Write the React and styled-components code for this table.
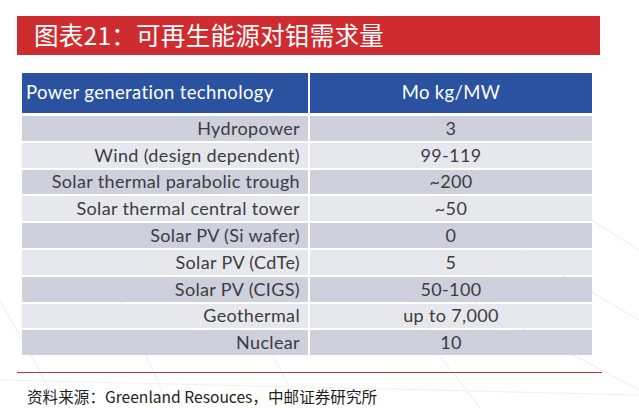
import React from "react";
import styled, { createGlobalStyle } from "styled-components";

const Global = createGlobalStyle`
  html, body { margin: 0; padding: 0; background: #ffffff; }
  body { width: 639px; height: 408px; overflow: hidden; }
`;

const Page = styled.div`
  position: relative;
  width: 639px;
  height: 408px;
  display: flex;
  flex-direction: column;
  padding-top: 16px;
  box-sizing: border-box;
  font-family: Lato, "Noto Sans", sans-serif;
`;

const Watermark = styled.svg`
  position: absolute;
  inset: 0;
  z-index: 0;
  pointer-events: none;
`;

const Content = styled.div`
  position: relative;
  z-index: 1;
  display: flex;
  flex-direction: column;
`;

const TitleBar = styled.div`
  margin-left: 17px;
  width: 583px;
  height: 39px;
  background: #cf2c2f;
  display: flex;
  align-items: center;
  padding-left: 17px;
  padding-bottom: 3px;
  box-sizing: border-box;
  color: #ffffff;
  font-family: "Noto Sans CJK SC", "Noto Sans", sans-serif;
  font-size: 24.6px;
  letter-spacing: 0.2px;
`;

const Table = styled.div`
  margin-top: 18px;
  margin-left: 22px;
  width: 570px;
  display: grid;
  grid-template-columns: 286px 282px;
  column-gap: 2px;
  row-gap: 2px;
  grid-template-rows: 41px repeat(9, 24.8px);
`;

const HeadCell = styled.div`
  background: #2a52a0;
  color: #ffffff;
  font-size: 18.5px;
  letter-spacing: 0.35px;
  display: flex;
  align-items: center;
  justify-content: ${(p) => (p.$center ? "center" : "flex-start")};
  padding-left: ${(p) => (p.$center ? "0" : "4px")};
  padding-bottom: 2px;
  margin-bottom: 1px;
`;

const Cell = styled.div`
  background: ${(p) => (p.$dark ? "#ced0dc" : "#e7e8ee")};
  color: #3c3c40;
  font-size: 18px;
  letter-spacing: 0.35px;
  display: flex;
  align-items: center;
  justify-content: ${(p) => (p.$center ? "center" : "flex-end")};
  padding-right: ${(p) => (p.$center ? "0" : "8px")};
  padding-bottom: 1px;
  box-sizing: border-box;
`;

const Rule = styled.div`
  margin-top: 17px;
  margin-left: 17px;
  width: 585px;
  height: 1px;
  background: #c8323b;
`;

const Source = styled.div`
  margin-top: 14px;
  margin-left: 27px;
  font-family: "Noto Sans CJK SC", "Noto Sans", sans-serif;
  font-size: 15.6px;
  color: #1e1e1e;
  line-height: 18px;
`;

const rows = [
  ["Hydropower", "3"],
  ["Wind (design dependent)", "99-119"],
  ["Solar thermal parabolic trough", "~200"],
  ["Solar thermal central tower", "~50"],
  ["Solar PV (Si wafer)", "0"],
  ["Solar PV (CdTe)", "5"],
  ["Solar PV (CIGS)", "50-100"],
  ["Geothermal", "up to 7,000"],
  ["Nuclear", "10"],
];

export default function App() {
  return (
    <Page>
      <Global />
      <Watermark width="639" height="408" viewBox="0 0 639 408">
        <g stroke="#f1f1f3" strokeWidth="1.2" fill="none">
          <path d="M0 300 L60 408" />
          <path d="M120 300 L170 408" />
          <path d="M260 330 L300 408" />
          <path d="M420 330 L480 408" />
          <path d="M470 300 L639 390" />
          <path d="M520 250 L639 320" />
          <path d="M560 200 L639 250" />
          <path d="M0 380 L639 395" />
        </g>
      </Watermark>
      <Content>
        <TitleBar>图表21：可再生能源对钼需求量</TitleBar>
        <Table>
          <HeadCell>Power generation technology</HeadCell>
          <HeadCell $center>Mo kg/MW</HeadCell>
          {rows.map(([name, val], i) => (
            <React.Fragment key={name}>
              <Cell $dark={i % 2 === 0}>{name}</Cell>
              <Cell $dark={i % 2 === 0} $center>
                {val}
              </Cell>
            </React.Fragment>
          ))}
        </Table>
        <Rule />
        <Source>资料来源：Greenland Resouces，中邮证券研究所</Source>
      </Content>
    </Page>
  );
}
